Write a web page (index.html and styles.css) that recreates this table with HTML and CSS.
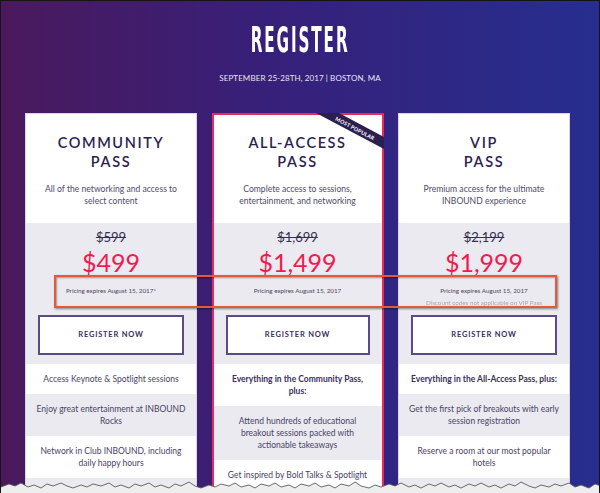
FILE: index.html
```html
<!DOCTYPE html>
<html lang="en">
<head>
<meta charset="utf-8">
<title>Register</title>
<link rel="stylesheet" href="styles.css">
</head>
<body>
<div class="frame">
  <header class="hero">
    <h1 class="title"><span>REGISTER</span></h1>
    <p class="dates">SEPTEMBER 25-28TH, 2017 | BOSTON, MA</p>
  </header>

  <div class="cards">
    <div class="card">
      <div class="card-top">
        <h2>COMMUNITY<br>PASS</h2>
        <p class="desc">All of the networking and access to select content</p>
      </div>
      <div class="pricing">
        <div class="old">$599</div>
        <div class="new">$499</div>
        <div class="notes"><p>Pricing expires August 15, 2017*</p></div>
        <a class="btn" href="#">REGISTER NOW</a>
      </div>
      <ul class="features">
        <li>Access Keynote &amp; Spotlight sessions</li>
        <li>Enjoy great entertainment at INBOUND Rocks</li>
        <li>Network in Club INBOUND, including daily happy hours</li>
        <li class="blank"></li>
      </ul>
    </div>

    <div class="card featured">
      <svg class="ribbon" viewBox="0 0 72 40" width="72" height="40">
        <polygon points="2,1 25,1 70,25 70,37" fill="#2a1f4f"/>
        <text x="41" y="16.5" transform="rotate(28 41 16.5)" text-anchor="middle" dominant-baseline="central" class="ribbon-text">MOST POPULAR</text>
      </svg>
      <div class="card-top">
        <h2>ALL-ACCESS<br>PASS</h2>
        <p class="desc">Complete access to sessions, entertainment, and networking</p>
      </div>
      <div class="pricing">
        <div class="old">$1,699</div>
        <div class="new">$1,499</div>
        <div class="notes"><p>Pricing expires August 15, 2017</p></div>
        <a class="btn" href="#">REGISTER NOW</a>
      </div>
      <ul class="features">
        <li class="lead">Everything in the Community Pass,<br>plus:</li>
        <li>Attend hundreds of educational breakout sessions packed with actionable takeaways</li>
        <li>Get inspired by Bold Talks &amp; Spotlight</li>
      </ul>
    </div>

    <div class="card">
      <div class="card-top">
        <h2>VIP<br>PASS</h2>
        <p class="desc">Premium access for the ultimate INBOUND experience</p>
      </div>
      <div class="pricing">
        <div class="old">$2,199</div>
        <div class="new">$1,999</div>
        <div class="notes"><p>Pricing expires August 15, 2017</p><p class="faint">Discount codes not applicable on VIP Pass</p></div>
        <a class="btn" href="#">REGISTER NOW</a>
      </div>
      <ul class="features">
        <li class="lead">Everything in the All-Access Pass, plus:</li>
        <li>Get the first pick of breakouts with early session registration</li>
        <li>Reserve a room at our most popular hotels</li>
        <li class="blank"></li>
      </ul>
    </div>
  </div>

  <div class="highlight"></div>

  <svg class="torn" viewBox="0 0 600 13" width="600" height="13" preserveAspectRatio="none">
    <polygon fill="#eeeeee" points="0,7 8,4 14,6 20,3 27,7 33,5 40,8 46,4 52,6 60,3 66,6 72,8 80,5 86,7 92,4 100,6 108,3 114,7 120,5 128,8 134,4 140,6 148,3 154,7 160,5 168,8 174,4 180,6 188,2 194,6 200,8 208,5 214,7 220,4 228,6 234,3 240,7 248,5 254,8 260,4 268,6 274,3 280,7 288,5 294,8 300,4 308,6 314,3 320,7 328,5 334,8 340,4 348,6 354,2 360,6 368,8 374,5 380,7 388,4 394,6 400,3 408,7 414,5 420,8 428,4 434,6 440,3 448,7 454,5 460,8 468,4 474,6 480,3 488,7 494,5 500,8 508,4 514,6 520,2 528,6 534,8 540,5 548,7 554,4 560,6 568,3 574,7 580,5 588,8 594,4 600,6 600,13 0,13"/>
    <polyline fill="none" stroke="#5a5a5a" stroke-width="0.9" points="0,7 8,4 14,6 20,3 27,7 33,5 40,8 46,4 52,6 60,3 66,6 72,8 80,5 86,7 92,4 100,6 108,3 114,7 120,5 128,8 134,4 140,6 148,3 154,7 160,5 168,8 174,4 180,6 188,2 194,6 200,8 208,5 214,7 220,4 228,6 234,3 240,7 248,5 254,8 260,4 268,6 274,3 280,7 288,5 294,8 300,4 308,6 314,3 320,7 328,5 334,8 340,4 348,6 354,2 360,6 368,8 374,5 380,7 388,4 394,6 400,3 408,7 414,5 420,8 428,4 434,6 440,3 448,7 454,5 460,8 468,4 474,6 480,3 488,7 494,5 500,8 508,4 514,6 520,2 528,6 534,8 540,5 548,7 554,4 560,6 568,3 574,7 580,5 588,8 594,4 600,6"/>
  </svg>
</div>
</body>
</html>
```

FILE: styles.css
```css
* { box-sizing: border-box; }

html, body {
  margin: 0;
  padding: 0;
  background: #eeeeee;
}

.frame {
  position: relative;
  width: 600px;
  height: 493px;
  overflow: hidden;
  border: 1px solid #151515;
  border-bottom: 0;
  background: linear-gradient(90deg, #4a195c 0%, #37207a 45%, #262e8e 100%);
  font-family: Lato, "Open Sans", sans-serif;
}

.hero {
  text-align: center;
  padding-top: 21px;
}

.title {
  margin: 0;
  height: 36px;
  line-height: 36px;
}

.title span {
  display: inline-block;
  font-family: "Liberation Sans Narrow", "DejaVu Sans Condensed", sans-serif;
  font-weight: bold;
  font-size: 36px;
  line-height: 36px;
  letter-spacing: 4px;
  color: #ffffff;
  transform: scaleX(0.47);
}

.dates {
  margin: 13px 0 0;
  font-size: 8px;
  line-height: 14px;
  color: #e6e3f2;
  letter-spacing: 0.1px;
}

.cards {
  display: flex;
  gap: 14.5px;
  padding-left: 24px;
  margin-top: 28px;
  align-items: flex-start;
}

.card {
  position: relative;
  width: 172px;
  flex: 0 0 172px;
  background: #ffffff;
  border: 1px solid #d9d4ee;
}

.card.featured {
  border: 2px solid #ea2a5c;
}

.card-top {
  height: 109px;
  padding-top: 18.5px;
  text-align: center;
}

.featured .card-top {
  height: 108px;
  padding-top: 17.5px;
}

.card-top h2 {
  margin: 0;
  font-size: 14.5px;
  line-height: 19px;
  font-weight: 600;
  letter-spacing: 1.6px;
  color: #2b2150;
}

.desc {
  margin: 12px 16px 0;
  font-size: 8.6px;
  line-height: 12px;
  color: #4f4a68;
}

.pricing {
  background: #ebeaf0;
  padding: 6px 12px 9px;
  text-align: center;
}

.old {
  font-size: 13px;
  line-height: 17px;
  color: #352f4e;
  text-decoration: line-through;
}

.new {
  margin-top: 2px;
  font-size: 25px;
  line-height: 28px;
  color: #f01b4f;
}

.notes {
  margin-top: 9px;
  height: 26px;
}

.notes p {
  margin: 0;
  font-size: 6.3px;
  line-height: 12px;
  color: #4c4762;
}

.notes .faint {
  color: #6d6883;
  opacity: 0.55;
  filter: blur(0.5px);
}

.btn {
  display: block;
  margin-top: 4px;
  height: 40px;
  line-height: 36px;
  border: 2px solid #5a4a86;
  background: #ffffff;
  color: #3a2e5c;
  font-size: 7.5px;
  font-weight: 700;
  letter-spacing: 0.8px;
  text-decoration: none;
}

.features {
  list-style: none;
  margin: 0;
  padding: 0;
}

.features li {
  padding: 9px 10px;
  font-size: 8.5px;
  line-height: 12px;
  text-align: center;
  color: #4a4266;
  background: #ffffff;
}

.features li:nth-child(even) {
  background: #ebeaf0;
}

.features li.blank {
  height: 30px;
}

.features li.lead {
  font-weight: 700;
  color: #3a2f5e;
}

.ribbon {
  position: absolute;
  top: -3px;
  right: -4px;
  overflow: visible;
}

.ribbon-text {
  font-family: Lato, sans-serif;
  font-size: 5.3px;
  font-weight: 700;
  fill: #ffffff;
  letter-spacing: 0.2px;
}

.highlight {
  position: absolute;
  left: 53px;
  top: 274px;
  width: 503px;
  height: 33px;
  border: 2px solid #e35a3b;
  box-shadow: 1px 1px 2px rgba(0, 0, 0, 0.45), inset 1px 1px 2px rgba(0, 0, 0, 0.35);
}

.torn {
  position: absolute;
  left: 0;
  bottom: 0;
}
```
